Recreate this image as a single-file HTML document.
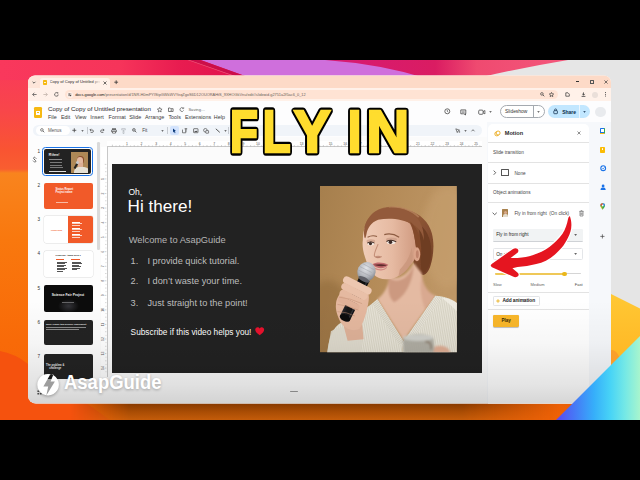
<!DOCTYPE html>
<html><head><meta charset="utf-8">
<style>
html,body{margin:0;padding:0;background:#000;}
body{width:640px;height:480px;overflow:hidden;position:relative;font-family:"Liberation Sans",sans-serif;}
#root{position:absolute;left:0;top:0;width:640px;height:480px;background:#000;overflow:hidden;}
.abs{position:absolute;}
#win{position:absolute;left:0;top:0;width:640px;height:480px;clip-path:inset(75.5px 29px 76.5px 28px round 7px 7px 8px 8px);}
#win div,#win span{position:absolute;white-space:pre;line-height:1;}
#win svg{position:absolute;overflow:visible;}
.m{font-size:5.4px;color:#3a3a3a;top:114.6px;}
.p{font-size:4.7px;color:#444;margin-top:1px;}
.hr{left:488px;width:101px;height:0.7px;background:#e3e3e3;}
.th{left:43.5px;width:49px;height:26.5px;border-radius:2px;overflow:hidden;}
.n{left:34px;width:6px;text-align:right;font-size:4.6px;color:#333;}
.sl{color:#bdbdbd;font-size:9.2px;}
</style></head><body>
<div id="root">
<svg class="abs" style="left:0;top:0" width="640" height="480" viewBox="0 0 640 480">
<defs>
<linearGradient id="gBase" x1="0" y1="60" x2="0" y2="420" gradientUnits="userSpaceOnUse">
<stop offset="0" stop-color="#f9385c"/><stop offset="0.14" stop-color="#f8464a"/><stop offset="0.25" stop-color="#f95432"/><stop offset="0.303" stop-color="#f95e30"/>
<stop offset="0.314" stop-color="#f9841e"/><stop offset="0.5" stop-color="#f9780e"/><stop offset="0.78" stop-color="#f86a08"/><stop offset="1" stop-color="#f66206"/>
</linearGradient>
<linearGradient id="gTopL" x1="0" y1="0" x2="240" y2="0" gradientUnits="userSpaceOnUse">
<stop offset="0" stop-color="#f9385c"/><stop offset="0.5" stop-color="#f6345a"/><stop offset="0.75" stop-color="#e81c50"/><stop offset="1" stop-color="#e0134d"/></linearGradient>
<linearGradient id="gMag" x1="325" y1="0" x2="570" y2="0" gradientUnits="userSpaceOnUse">
<stop offset="0" stop-color="#d61a74"/><stop offset="0.45" stop-color="#da1c62"/><stop offset="0.62" stop-color="#ef4a70"/><stop offset="1" stop-color="#f4587c"/></linearGradient>
<linearGradient id="gYel" x1="0" y1="294" x2="0" y2="420" gradientUnits="userSpaceOnUse">
<stop offset="0" stop-color="#ffc834"/><stop offset="0.6" stop-color="#ffb422"/><stop offset="1" stop-color="#ffa81c"/></linearGradient>
<linearGradient id="gShadow" x1="0" y1="403" x2="0" y2="420" gradientUnits="userSpaceOnUse">
<stop offset="0" stop-color="#853800"/><stop offset="0.5" stop-color="#a84c04"/><stop offset="1" stop-color="#c45c0a"/></linearGradient>
<linearGradient id="gShadowFade" x1="70" y1="0" x2="560" y2="0" gradientUnits="userSpaceOnUse">
<stop offset="0" stop-color="#fff" stop-opacity="0"/><stop offset="0.12" stop-color="#fff" stop-opacity="1"/><stop offset="0.8" stop-color="#fff" stop-opacity="1"/><stop offset="1" stop-color="#fff" stop-opacity="0.1"/></linearGradient>
<mask id="mShadow"><rect x="0" y="400" width="640" height="24" fill="url(#gShadowFade)"/></mask>
</defs>
<rect x="0" y="0" width="640" height="480" fill="#000"/>
<rect x="0" y="60" width="640" height="360" fill="url(#gBase)"/>
<!-- lower-left curve -->
<path d="M0,351 Q16,354 28,364 Q60,384 110,420 L0,420 Z" fill="#f5520e"/>
<!-- top strip -->
<rect x="0" y="60" width="258" height="20" fill="url(#gTopL)"/>
<path d="M200.5,60 L640,60 L640,80 L256,80 Z" fill="#cf6fdc"/>
<path d="M188.5,60 L200.5,60 L256,80 L246,80 Z" fill="#cc0e4a"/>
<path d="M187.6,60 L189.4,60 L246.6,80 L244.6,80 Z" fill="#f25a7c"/>
<path d="M325,60 Q380,64 425,78 L640,78 L640,60 Z" fill="url(#gMag)"/>
<!-- grey right -->
<path d="M568,60 Q520,68 478,78 L640,78 L640,60 Z" fill="#e6e6e6"/>
<rect x="600" y="60" width="40" height="360" fill="#e5e5e5"/>
<path d="M600,288.5 L640,308.5 L640,420 L600,420 Z" fill="url(#gYel)"/>
<ellipse cx="612" cy="372" rx="10" ry="22" fill="#f58a30" opacity="0.55"/>
<!-- bottom shadow -->
<rect x="60" y="400" width="520" height="20" fill="url(#gShadow)" mask="url(#mShadow)"/>
<rect x="0" y="0" width="640" height="60" fill="#000"/>
<rect x="0" y="420" width="640" height="60" fill="#000"/>
</svg>
<div id="win">
<div style="left:28px;top:75px;width:583px;height:330px;background:#fff"></div>
<!-- tab strip -->
<div style="left:28px;top:75px;width:583px;height:12.5px;background:linear-gradient(90deg,#fee6da 0,#fddac7 90px)"></div>
<div style="left:30.5px;top:78.5px;width:6.5px;height:6.5px;border-radius:2px;background:#fce7db"></div>
<svg style="left:32px;top:80.5px" width="4" height="3" viewBox="0 0 4 3"><path d="M0.6,0.8 L2,2.2 L3.4,0.8" fill="none" stroke="#333" stroke-width="0.8"/></svg>
<div style="left:39.5px;top:77.5px;width:70.5px;height:10px;background:#fff1e9;border-radius:3px 3px 0 0"></div>
<div style="left:42.8px;top:80.3px;width:4.4px;height:4.4px;border-radius:0.8px;background:#f5b912"></div>
<div style="left:43.9px;top:81.6px;width:2.2px;height:1.8px;background:#fff3d0"></div>
<div style="left:49.5px;top:80.4px;width:50px;overflow:hidden;font-size:4.1px;color:#2a2a2a;height:5px">Copy of Copy of Untitled pres</div>
<div style="left:92px;top:79px;width:9px;height:7px;background:linear-gradient(90deg,rgba(255,241,233,0),#fff1e9)"></div>
<svg style="left:103px;top:80.5px" width="4" height="4" viewBox="0 0 4 4"><path d="M0.5,0.5 L3.5,3.5 M3.5,0.5 L0.5,3.5" stroke="#333" stroke-width="0.7"/></svg>
<svg style="left:114.3px;top:80.3px" width="4.4" height="4.4" viewBox="0 0 4.4 4.4"><path d="M2.2,0.3 V4.1 M0.3,2.2 H4.1" stroke="#333" stroke-width="0.8"/></svg>
<!-- window controls -->
<div style="left:575.6px;top:81.4px;width:3.4px;height:0.7px;background:#333"></div>
<div style="left:589.7px;top:80.2px;width:2px;height:2px;border:0.45px solid #555;border-radius:0.5px"></div>
<svg style="left:603.5px;top:79.6px" width="4" height="4" viewBox="0 0 4 4"><path d="M0.4,0.4 L3.6,3.6 M3.6,0.4 L0.4,3.6" stroke="#333" stroke-width="0.65"/></svg>
<!-- address row -->
<div style="left:28px;top:87.5px;width:583px;height:13.8px;background:#fff1e9"></div>
<svg style="left:32px;top:92px" width="5" height="5" viewBox="0 0 5 5"><path d="M4.6,2.5 H0.8 M2.4,0.7 L0.6,2.5 L2.4,4.3" fill="none" stroke="#444" stroke-width="0.7"/></svg>
<svg style="left:43px;top:92px" width="5" height="5" viewBox="0 0 5 5"><path d="M0.4,2.5 H4.2 M2.6,0.7 L4.4,2.5 L2.6,4.3" fill="none" stroke="#b9aaa2" stroke-width="0.7"/></svg>
<svg style="left:53.5px;top:92px" width="5" height="5" viewBox="0 0 5 5"><path d="M4.2,2.5 A1.8,1.8 0 1 1 3.6,1.1" fill="none" stroke="#444" stroke-width="0.7"/><path d="M3.0,0.2 L4.4,0.5 L4.0,1.9 Z" fill="#444"/></svg>
<div style="left:65px;top:90px;width:492.5px;height:9.2px;border-radius:4.6px;background:#ffe3d4"></div>
<div style="left:66.6px;top:91.6px;width:6px;height:6px;border-radius:3px;background:#fff1e9"></div>
<svg style="left:67.8px;top:92.8px" width="3.6" height="3.6" viewBox="0 0 3.6 3.6"><path d="M0.2,1 H3.4 M0.2,2.6 H3.4" stroke="#333" stroke-width="0.5"/><circle cx="1.2" cy="1" r="0.6" fill="#333"/><circle cx="2.4" cy="2.6" r="0.6" fill="#333"/></svg>
<div style="left:75.2px;top:92.6px;font-size:3.9px;color:#222;letter-spacing:0"><span style="position:static;color:#111">docs.google.com</span><span style="position:static;color:#6b5f59">/presentation/d/1NR-H0mPYIStpGWkWVYeqZgoS6D12OUORAHtS_9XHOGkVnu/edit#slide=id.g2751a2f5ac6_0_12</span></div>
<svg style="left:539.6px;top:92.3px" width="4.6" height="4.6" viewBox="0 0 4.6 4.6"><circle cx="1.9" cy="1.9" r="1.3" fill="none" stroke="#333" stroke-width="0.65"/><path d="M2.9,2.9 L4.3,4.3" stroke="#333" stroke-width="0.75"/></svg>
<svg style="left:549.4px;top:92px" width="5" height="5" viewBox="0 0 10 10"><path d="M5,0.8 L6.3,3.7 L9.4,4 L7,6.1 L7.7,9.2 L5,7.6 L2.3,9.2 L3,6.1 L0.6,4 L3.7,3.7 Z" fill="none" stroke="#333" stroke-width="1.3"/></svg>
<svg style="left:565px;top:92px" width="5" height="5" viewBox="0 0 5 5"><path d="M0.8,0.8 H3 L4.3,2.1 V4.2 H0.8 Z" fill="none" stroke="#333" stroke-width="0.7"/></svg>
<svg style="left:580.5px;top:92px" width="5" height="5" viewBox="0 0 5 5"><path d="M2.5,0.4 V3 M1.2,1.9 L2.5,3.2 L3.8,1.9 M0.6,4.4 H4.4" fill="none" stroke="#333" stroke-width="0.75"/></svg>
<div style="left:592px;top:91.5px;width:6px;height:6px;border-radius:3px;background:#eadfd9"></div>
<div style="left:604.9px;top:92.1px;width:0.9px;height:0.9px;border-radius:1px;background:#333;box-shadow:0 1.7px 0 #333,0 3.4px 0 #333"></div>
<!-- docs header -->
<div style="left:28px;top:101.3px;width:583px;height:36px;background:#fdfdfe"></div>
<div style="left:34.4px;top:107px;width:7.6px;height:11.2px;border-radius:1.2px;background:#f6b913"></div>
<div style="left:35.9px;top:111.2px;width:4.6px;height:3.8px;box-sizing:border-box;border:0.7px solid #fff;border-radius:0.3px"></div>
<div style="left:36.2px;top:112.8px;width:4px;height:0.6px;background:#fff"></div>
<div style="left:48px;top:105.8px;font-size:6.2px;color:#1f1f1f">Copy of Copy of Untitled presentation</div>
<svg style="left:157.4px;top:106.6px" width="5.4" height="5.4" viewBox="0 0 10 10"><path d="M5,0.8 L6.3,3.7 L9.4,4 L7,6.1 L7.7,9.2 L5,7.6 L2.3,9.2 L3,6.1 L0.6,4 L3.7,3.7 Z" fill="none" stroke="#444" stroke-width="1.2"/></svg>
<svg style="left:168.2px;top:106.8px" width="5.6" height="5" viewBox="0 0 5.6 5"><path d="M0.5,1 H2.2 L2.8,1.7 H5.1 V4.5 H0.5 Z" fill="none" stroke="#444" stroke-width="0.7"/><path d="M2.2,3.1 H3.8 M3.2,2.5 L3.9,3.1 L3.2,3.7" fill="none" stroke="#444" stroke-width="0.5"/></svg>
<svg style="left:179.4px;top:106.8px" width="5.6" height="5" viewBox="0 0 5.6 5"><path d="M4.2,1.2 A1.9,1.9 0 1 0 4.6,3.4" fill="none" stroke="#555" stroke-width="0.7"/><path d="M3.2,1.6 L4.7,1.6 L4.7,0.2" fill="none" stroke="#555" stroke-width="0.6"/></svg>
<div style="left:188.4px;top:107.6px;font-size:4.1px;color:#666">Saving…</div>
<span class="m" style="left:48px">File</span><span class="m" style="left:61px">Edit</span><span class="m" style="left:74.9px">View</span><span class="m" style="left:90.3px">Insert</span><span class="m" style="left:108.6px">Format</span><span class="m" style="left:129.2px">Slide</span><span class="m" style="left:145px">Arrange</span><span class="m" style="left:168.4px">Tools</span><span class="m" style="left:184.9px">Extensions</span><span class="m" style="left:213.8px">Help</span>
<!-- header right -->
<svg style="left:443.9px;top:108.3px" width="6.6" height="6.6" viewBox="0 0 6.6 6.6"><circle cx="3.3" cy="3.3" r="2.5" fill="none" stroke="#3c3c3c" stroke-width="0.75"/><path d="M3.3,1.9 V3.4 L4.3,4.1" fill="none" stroke="#3c3c3c" stroke-width="0.65"/></svg>
<svg style="left:460.4px;top:108.5px" width="6.6" height="6.6" viewBox="0 0 6.6 6.6"><path d="M0.8,0.9 H5.8 V4.8 H4.9 L5.8,6 L3.8,4.8 H0.8 Z" fill="none" stroke="#3c3c3c" stroke-width="0.75"/><path d="M1.9,2.2 H4.7 M1.9,3.4 H4.7" stroke="#3c3c3c" stroke-width="0.5"/></svg>
<svg style="left:477.8px;top:108.6px" width="7.6" height="6.4" viewBox="0 0 7.6 6.4"><rect x="0.7" y="1.1" width="4.4" height="4.2" rx="1" fill="none" stroke="#3c3c3c" stroke-width="0.75"/><path d="M5.1,2.7 L6.9,1.5 V4.9 L5.1,3.7" fill="none" stroke="#3c3c3c" stroke-width="0.7"/></svg>
<svg style="left:488.8px;top:110.8px" width="3" height="2" viewBox="0 0 3 2"><path d="M0.2,0.3 H2.8 L1.5,1.8 Z" fill="#444"/></svg>
<div style="left:499.6px;top:105.3px;width:45px;height:12.6px;border-radius:7px;border:0.6px solid #a4a9af;box-sizing:border-box;background:#fff"></div>
<div style="left:533.3px;top:105.6px;width:0.6px;height:12px;background:#a4a9af"></div>
<div style="left:505px;top:110.1px;font-size:4.9px;color:#333">Slideshow</div>
<svg style="left:537.3px;top:110.8px" width="3" height="2" viewBox="0 0 3 2"><path d="M0.2,0.3 H2.8 L1.5,1.8 Z" fill="#444"/></svg>
<div style="left:548px;top:105.3px;width:41.5px;height:12.6px;border-radius:7px;background:#c2e7ff"></div>
<div style="left:579.2px;top:105.3px;width:0.7px;height:12.6px;background:#eaf6ff"></div>
<svg style="left:553.4px;top:108.2px" width="5.2" height="6.4" viewBox="0 0 5.2 6.4"><rect x="0.8" y="2.7" width="3.6" height="3" rx="0.5" fill="none" stroke="#0b2a4a" stroke-width="0.75"/><path d="M1.6,2.7 V1.9 A1,1 0 0 1 3.6,1.9 V2.7" fill="none" stroke="#0b2a4a" stroke-width="0.7"/></svg>
<div style="left:562.2px;top:109.9px;font-size:5px;font-weight:700;color:#0b2a4a">Share</div>
<svg style="left:582.6px;top:110.8px" width="3" height="2" viewBox="0 0 3 2"><path d="M0.2,0.3 H2.8 L1.5,1.8 Z" fill="#0b2a4a"/></svg>
<div style="left:595px;top:106.8px;width:10.6px;height:10.6px;border-radius:6px;background:#e9ebee"></div>
<!-- toolbar -->
<div style="left:33px;top:125px;width:448.5px;height:11px;border-radius:5.5px;background:#f0f4f9"></div>
<div style="left:36px;top:126px;width:33.8px;height:9px;border-radius:4.5px;background:#fff"></div>
<svg style="left:39.6px;top:128.2px" width="4.6" height="4.6" viewBox="0 0 4.6 4.6"><circle cx="1.9" cy="1.9" r="1.3" fill="none" stroke="#444" stroke-width="0.65"/><path d="M2.9,2.9 L4.3,4.3" stroke="#444" stroke-width="0.75"/></svg>
<div style="left:48px;top:129.3px;font-size:4.5px;color:#555">Menus</div>
<!-- toolbar icons -->
<svg style="left:72.4px;top:128.1px" width="4.6" height="4.6" viewBox="0 0 4.6 4.6"><path d="M2.3,0.3 V4.3 M0.3,2.3 H4.3" stroke="#444" stroke-width="0.8"/></svg>
<svg style="left:80.6px;top:129.5px" width="3" height="2" viewBox="0 0 3 2"><path d="M0.3,0.3 H2.7 L1.5,1.7 Z" fill="#444"/></svg>
<div style="left:86.6px;top:127.2px;width:0.5px;height:6.6px;background:#c7cbd1"></div>
<svg style="left:89.4px;top:128px" width="5" height="5" viewBox="0 0 5 5"><path d="M1,2 H3.2 A1.2,1.2 0 0 1 3.2,4.4 H1.6" fill="none" stroke="#444" stroke-width="0.7"/><path d="M2,0.8 L0.8,2 L2,3.2" fill="none" stroke="#444" stroke-width="0.7"/></svg>
<svg style="left:100.3px;top:128px" width="5" height="5" viewBox="0 0 5 5"><path d="M4,2 H1.8 A1.2,1.2 0 0 0 1.8,4.4 H3.4" fill="none" stroke="#444" stroke-width="0.7"/><path d="M3,0.8 L4.2,2 L3,3.2" fill="none" stroke="#444" stroke-width="0.7"/></svg>
<svg style="left:110.8px;top:127.6px" width="6" height="5.6" viewBox="0 0 6 5.6"><rect x="0.6" y="1.8" width="4.8" height="2.4" rx="0.6" fill="none" stroke="#444" stroke-width="0.75"/><rect x="1.7" y="0.5" width="2.6" height="1.3" fill="none" stroke="#444" stroke-width="0.6"/><rect x="1.7" y="3.3" width="2.6" height="1.8" fill="#fff" stroke="#444" stroke-width="0.6"/></svg>
<svg style="left:121.4px;top:127.6px" width="5" height="6" viewBox="0 0 5 6"><path d="M0.7,0.6 H4.3 V2 H0.7 Z M2.5,2 V3.2 M2,3.2 H3 V5.5 H2 Z" fill="none" stroke="#b5b9bf" stroke-width="0.7"/></svg>
<svg style="left:132.3px;top:128.1px" width="4.8" height="4.8" viewBox="0 0 4.8 4.8"><circle cx="1.9" cy="1.9" r="1.4" fill="none" stroke="#444" stroke-width="0.65"/><path d="M2.9,2.9 L4.4,4.4" stroke="#444" stroke-width="0.75"/><path d="M1.2,1.9 H2.6 M1.9,1.2 V2.6" stroke="#444" stroke-width="0.4"/></svg>
<div style="left:142.2px;top:129.2px;font-size:4.6px;color:#444">Fit</div>
<svg style="left:160.8px;top:129.5px" width="3" height="2" viewBox="0 0 3 2"><path d="M0.3,0.3 H2.7 L1.5,1.7 Z" fill="#444"/></svg>
<div style="left:166.6px;top:127.2px;width:0.5px;height:6.6px;background:#c7cbd1"></div>
<div style="left:170.2px;top:126.2px;width:8.4px;height:8.6px;border-radius:2px;background:#d3e3fd"></div>
<svg style="left:172px;top:127.7px" width="5" height="5.6" viewBox="0 0 5 5.6"><path d="M1,0.5 L1,4.4 L2,3.5 L2.8,5.2 L3.5,4.9 L2.7,3.2 L4,3.1 Z" fill="#0b3a7a"/></svg>
<svg style="left:182px;top:127.8px" width="5.6" height="5.4" viewBox="0 0 5.6 5.4"><path d="M0.5,1.6 V4.8 H3.8 V2.6" fill="none" stroke="#444" stroke-width="0.65"/><path d="M2.6,0.8 H5.2 M3.9,0.8 V3.6" stroke="#444" stroke-width="0.8"/></svg>
<svg style="left:192.5px;top:127.8px" width="5.6" height="5.4" viewBox="0 0 5.6 5.4"><rect x="0.6" y="0.7" width="4.4" height="4" rx="0.4" fill="none" stroke="#444" stroke-width="0.7"/><path d="M1.2,4 L2.3,2.8 L3,3.5 L3.7,2.6 L4.5,4 Z" fill="#444"/></svg>
<svg style="left:203.4px;top:127.6px" width="6.2" height="5.8" viewBox="0 0 6.2 5.8"><circle cx="2.4" cy="2.3" r="1.8" fill="none" stroke="#444" stroke-width="0.65"/><rect x="2.8" y="2.6" width="2.8" height="2.6" rx="0.3" fill="#f0f4f9" stroke="#444" stroke-width="0.65"/></svg>
<svg style="left:215px;top:127.8px" width="5.6" height="5.2" viewBox="0 0 5.6 5.2"><path d="M0.8,0.8 L4.8,4.4" stroke="#444" stroke-width="0.9"/></svg>
<svg style="left:223.8px;top:129.5px" width="3" height="2" viewBox="0 0 3 2"><path d="M0.3,0.3 H2.7 L1.5,1.7 Z" fill="#444"/></svg>
<div style="left:228.4px;top:127.2px;width:0.5px;height:6.6px;background:#c7cbd1"></div>
<!-- toolbar right end -->
<svg style="left:455.4px;top:127.6px" width="5.4" height="5.4" viewBox="0 0 5.4 5.4"><path d="M0.8,0.8 L4.6,2.2 L3,2.9 L2.3,4.6 Z" fill="none" stroke="#444" stroke-width="0.65"/><path d="M3.6,3.9 H5.2 M4.4,3.1 V4.7" stroke="#444" stroke-width="0.5"/></svg>
<svg style="left:463.6px;top:129.5px" width="3" height="2" viewBox="0 0 3 2"><path d="M0.3,0.3 H2.7 L1.5,1.7 Z" fill="#444"/></svg>
<svg style="left:470.5px;top:128.8px" width="4" height="3" viewBox="0 0 4 3"><path d="M0.5,2.3 L2,0.7 L3.5,2.3" fill="none" stroke="#444" stroke-width="0.7"/></svg>
<!-- main area -->
<div style="left:28px;top:137.3px;width:72px;height:270px;background:#fdfdfd"></div>
<div style="left:100px;top:137.3px;width:387px;height:270px;background:#fbfbfb"></div>
<!-- filmstrip scrollbar -->
<div style="left:97.2px;top:141.6px;width:2.4px;height:108px;border-radius:1.2px;background:#dadada"></div>
<!-- rulers -->
<div style="left:106.6px;top:140.6px;width:375px;height:5.8px;background:#fff;border-bottom:0.5px solid #c8c8c8"></div>
<div style="left:101.4px;top:146.6px;width:5.2px;height:230px;background:#fff;border-right:0.5px solid #c8c8c8"></div>
<svg style="left:0;top:0" width="640" height="480" viewBox="0 0 640 480"><text x="127.0" y="144.6" font-size="3.4" fill="#555" text-anchor="middle" font-family="Liberation Sans, sans-serif">1</text><text x="141.5" y="144.6" font-size="3.4" fill="#555" text-anchor="middle" font-family="Liberation Sans, sans-serif">2</text><text x="156.1" y="144.6" font-size="3.4" fill="#555" text-anchor="middle" font-family="Liberation Sans, sans-serif">3</text><text x="170.6" y="144.6" font-size="3.4" fill="#555" text-anchor="middle" font-family="Liberation Sans, sans-serif">4</text><text x="185.2" y="144.6" font-size="3.4" fill="#555" text-anchor="middle" font-family="Liberation Sans, sans-serif">5</text><text x="199.7" y="144.6" font-size="3.4" fill="#555" text-anchor="middle" font-family="Liberation Sans, sans-serif">6</text><text x="214.2" y="144.6" font-size="3.4" fill="#555" text-anchor="middle" font-family="Liberation Sans, sans-serif">7</text><text x="228.8" y="144.6" font-size="3.4" fill="#555" text-anchor="middle" font-family="Liberation Sans, sans-serif">8</text><text x="243.4" y="144.6" font-size="3.4" fill="#555" text-anchor="middle" font-family="Liberation Sans, sans-serif">9</text><text x="257.9" y="144.6" font-size="3.4" fill="#555" text-anchor="middle" font-family="Liberation Sans, sans-serif">10</text><text x="272.5" y="144.6" font-size="3.4" fill="#555" text-anchor="middle" font-family="Liberation Sans, sans-serif">11</text><text x="287.0" y="144.6" font-size="3.4" fill="#555" text-anchor="middle" font-family="Liberation Sans, sans-serif">12</text><text x="301.6" y="144.6" font-size="3.4" fill="#555" text-anchor="middle" font-family="Liberation Sans, sans-serif">13</text><text x="316.1" y="144.6" font-size="3.4" fill="#555" text-anchor="middle" font-family="Liberation Sans, sans-serif">14</text><text x="330.6" y="144.6" font-size="3.4" fill="#555" text-anchor="middle" font-family="Liberation Sans, sans-serif">15</text><text x="345.2" y="144.6" font-size="3.4" fill="#555" text-anchor="middle" font-family="Liberation Sans, sans-serif">16</text><text x="359.8" y="144.6" font-size="3.4" fill="#555" text-anchor="middle" font-family="Liberation Sans, sans-serif">17</text><text x="374.3" y="144.6" font-size="3.4" fill="#555" text-anchor="middle" font-family="Liberation Sans, sans-serif">18</text><text x="388.9" y="144.6" font-size="3.4" fill="#555" text-anchor="middle" font-family="Liberation Sans, sans-serif">19</text><text x="403.4" y="144.6" font-size="3.4" fill="#555" text-anchor="middle" font-family="Liberation Sans, sans-serif">20</text><text x="418.0" y="144.6" font-size="3.4" fill="#555" text-anchor="middle" font-family="Liberation Sans, sans-serif">21</text><text x="432.5" y="144.6" font-size="3.4" fill="#555" text-anchor="middle" font-family="Liberation Sans, sans-serif">22</text><text x="447.1" y="144.6" font-size="3.4" fill="#555" text-anchor="middle" font-family="Liberation Sans, sans-serif">23</text><text x="461.6" y="144.6" font-size="3.4" fill="#555" text-anchor="middle" font-family="Liberation Sans, sans-serif">24</text><text x="476.1" y="144.6" font-size="3.4" fill="#555" text-anchor="middle" font-family="Liberation Sans, sans-serif">25</text><text transform="translate(104.4,179.0) rotate(-90)" font-size="3.4" fill="#555" text-anchor="middle" font-family="Liberation Sans, sans-serif">1</text><text transform="translate(104.4,193.5) rotate(-90)" font-size="3.4" fill="#555" text-anchor="middle" font-family="Liberation Sans, sans-serif">2</text><text transform="translate(104.4,208.1) rotate(-90)" font-size="3.4" fill="#555" text-anchor="middle" font-family="Liberation Sans, sans-serif">3</text><text transform="translate(104.4,222.6) rotate(-90)" font-size="3.4" fill="#555" text-anchor="middle" font-family="Liberation Sans, sans-serif">4</text><text transform="translate(104.4,237.2) rotate(-90)" font-size="3.4" fill="#555" text-anchor="middle" font-family="Liberation Sans, sans-serif">5</text><text transform="translate(104.4,251.7) rotate(-90)" font-size="3.4" fill="#555" text-anchor="middle" font-family="Liberation Sans, sans-serif">6</text><text transform="translate(104.4,266.2) rotate(-90)" font-size="3.4" fill="#555" text-anchor="middle" font-family="Liberation Sans, sans-serif">7</text><text transform="translate(104.4,280.8) rotate(-90)" font-size="3.4" fill="#555" text-anchor="middle" font-family="Liberation Sans, sans-serif">8</text><text transform="translate(104.4,295.4) rotate(-90)" font-size="3.4" fill="#555" text-anchor="middle" font-family="Liberation Sans, sans-serif">9</text><text transform="translate(104.4,309.9) rotate(-90)" font-size="3.4" fill="#555" text-anchor="middle" font-family="Liberation Sans, sans-serif">10</text><text transform="translate(104.4,324.5) rotate(-90)" font-size="3.4" fill="#555" text-anchor="middle" font-family="Liberation Sans, sans-serif">11</text><text transform="translate(104.4,339.0) rotate(-90)" font-size="3.4" fill="#555" text-anchor="middle" font-family="Liberation Sans, sans-serif">12</text><text transform="translate(104.4,353.6) rotate(-90)" font-size="3.4" fill="#555" text-anchor="middle" font-family="Liberation Sans, sans-serif">13</text><text transform="translate(104.4,368.1) rotate(-90)" font-size="3.4" fill="#555" text-anchor="middle" font-family="Liberation Sans, sans-serif">14</text><path d="M112.40,144.70 V146.3 M116.04,145.50 V146.3 M119.68,145.10 V146.3 M123.31,145.50 V146.3 M126.95,144.70 V146.3 M130.59,145.50 V146.3 M134.23,145.10 V146.3 M137.86,145.50 V146.3 M141.50,144.70 V146.3 M145.14,145.50 V146.3 M148.78,145.10 V146.3 M152.41,145.50 V146.3 M156.05,144.70 V146.3 M159.69,145.50 V146.3 M163.33,145.10 V146.3 M166.96,145.50 V146.3 M170.60,144.70 V146.3 M174.24,145.50 V146.3 M177.88,145.10 V146.3 M181.51,145.50 V146.3 M185.15,144.70 V146.3 M188.79,145.50 V146.3 M192.43,145.10 V146.3 M196.06,145.50 V146.3 M199.70,144.70 V146.3 M203.34,145.50 V146.3 M206.98,145.10 V146.3 M210.61,145.50 V146.3 M214.25,144.70 V146.3 M217.89,145.50 V146.3 M221.53,145.10 V146.3 M225.16,145.50 V146.3 M228.80,144.70 V146.3 M232.44,145.50 V146.3 M236.08,145.10 V146.3 M239.71,145.50 V146.3 M243.35,144.70 V146.3 M246.99,145.50 V146.3 M250.62,145.10 V146.3 M254.26,145.50 V146.3 M257.90,144.70 V146.3 M261.54,145.50 V146.3 M265.18,145.10 V146.3 M268.81,145.50 V146.3 M272.45,144.70 V146.3 M276.09,145.50 V146.3 M279.73,145.10 V146.3 M283.36,145.50 V146.3 M287.00,144.70 V146.3 M290.64,145.50 V146.3 M294.27,145.10 V146.3 M297.91,145.50 V146.3 M301.55,144.70 V146.3 M305.19,145.50 V146.3 M308.83,145.10 V146.3 M312.46,145.50 V146.3 M316.10,144.70 V146.3 M319.74,145.50 V146.3 M323.38,145.10 V146.3 M327.01,145.50 V146.3 M330.65,144.70 V146.3 M334.29,145.50 V146.3 M337.93,145.10 V146.3 M341.56,145.50 V146.3 M345.20,144.70 V146.3 M348.84,145.50 V146.3 M352.48,145.10 V146.3 M356.11,145.50 V146.3 M359.75,144.70 V146.3 M363.39,145.50 V146.3 M367.02,145.10 V146.3 M370.66,145.50 V146.3 M374.30,144.70 V146.3 M377.94,145.50 V146.3 M381.58,145.10 V146.3 M385.21,145.50 V146.3 M388.85,144.70 V146.3 M392.49,145.50 V146.3 M396.12,145.10 V146.3 M399.76,145.50 V146.3 M403.40,144.70 V146.3 M407.04,145.50 V146.3 M410.68,145.10 V146.3 M414.31,145.50 V146.3 M417.95,144.70 V146.3 M421.59,145.50 V146.3 M425.23,145.10 V146.3 M428.86,145.50 V146.3 M432.50,144.70 V146.3 M436.14,145.50 V146.3 M439.77,145.10 V146.3 M443.41,145.50 V146.3 M447.05,144.70 V146.3 M450.69,145.50 V146.3 M454.33,145.10 V146.3 M457.96,145.50 V146.3 M461.60,144.70 V146.3 M465.24,145.50 V146.3 M468.88,145.10 V146.3 M472.51,145.50 V146.3 M476.15,144.70 V146.3 M479.79,145.50 V146.3 M104.80,164.40 H106.4 M105.60,168.04 H106.4 M105.20,171.68 H106.4 M105.60,175.31 H106.4 M104.80,178.95 H106.4 M105.60,182.59 H106.4 M105.20,186.23 H106.4 M105.60,189.86 H106.4 M104.80,193.50 H106.4 M105.60,197.14 H106.4 M105.20,200.78 H106.4 M105.60,204.41 H106.4 M104.80,208.05 H106.4 M105.60,211.69 H106.4 M105.20,215.33 H106.4 M105.60,218.96 H106.4 M104.80,222.60 H106.4 M105.60,226.24 H106.4 M105.20,229.88 H106.4 M105.60,233.51 H106.4 M104.80,237.15 H106.4 M105.60,240.79 H106.4 M105.20,244.43 H106.4 M105.60,248.06 H106.4 M104.80,251.70 H106.4 M105.60,255.34 H106.4 M105.20,258.98 H106.4 M105.60,262.61 H106.4 M104.80,266.25 H106.4 M105.60,269.89 H106.4 M105.20,273.52 H106.4 M105.60,277.16 H106.4 M104.80,280.80 H106.4 M105.60,284.44 H106.4 M105.20,288.08 H106.4 M105.60,291.71 H106.4 M104.80,295.35 H106.4 M105.60,298.99 H106.4 M105.20,302.62 H106.4 M105.60,306.26 H106.4 M104.80,309.90 H106.4 M105.60,313.54 H106.4 M105.20,317.18 H106.4 M105.60,320.81 H106.4 M104.80,324.45 H106.4 M105.60,328.09 H106.4 M105.20,331.73 H106.4 M105.60,335.36 H106.4 M104.80,339.00 H106.4 M105.60,342.64 H106.4 M105.20,346.27 H106.4 M105.60,349.91 H106.4 M104.80,353.55 H106.4 M105.60,357.19 H106.4 M105.20,360.83 H106.4 M105.60,364.46 H106.4 M104.80,368.10 H106.4 M105.60,371.74 H106.4" stroke="#777" stroke-width="0.35" fill="none"/></svg>
<!-- slide -->
<div style="left:112.4px;top:164.4px;width:369.7px;height:208.5px;background:#222222"></div>
<div style="left:128.4px;top:187.7px;font-size:8.5px;color:#fff">Oh,</div>
<div style="left:127.6px;top:198.1px;font-size:17.1px;color:#fff">Hi there!</div>
<div style="left:128.7px;top:236px;font-size:9.3px;color:#b5b5b5">Welcome to AsapGuide</div>
<div class="sl" style="left:130.6px;top:256.6px">1.</div><div class="sl" style="left:147.5px;top:256.6px">I provide quick tutorial.</div>
<div class="sl" style="left:130.6px;top:276.9px">2.</div><div class="sl" style="left:147.5px;top:276.9px">I don’t waste your time.</div>
<div class="sl" style="left:130.6px;top:298.5px">3.</div><div class="sl" style="left:147.5px;top:298.5px">Just straight to the point!</div>
<div style="left:130.6px;top:328.3px;font-size:8.3px;color:#fff">Subscribe if this video helps you!</div>
<svg style="left:254.6px;top:326.8px" width="9.4" height="8.6" viewBox="0 0 20 18"><path d="M10,17.5 C4,12.5 0.5,9.5 0.5,5.5 C0.5,2.5 2.8,0.5 5.4,0.5 C7.3,0.5 9,1.6 10,3.2 C11,1.6 12.7,0.5 14.6,0.5 C17.2,0.5 19.5,2.5 19.5,5.5 C19.5,9.5 16,12.5 10,17.5 Z" fill="#e9112d"/></svg>
<!--PHOTO-->
<svg style="left:319.6px;top:185.5px" width="136.9" height="166.3" viewBox="10 10 377 458" preserveAspectRatio="none">
<defs>
<linearGradient id="pbg" x1="0" y1="0" x2="1" y2="0.25"><stop offset="0" stop-color="#a67f4d"/><stop offset="0.45" stop-color="#b38a57"/><stop offset="1" stop-color="#bf9766"/></linearGradient>
<linearGradient id="skinG" x1="0" y1="0" x2="1" y2="0"><stop offset="0" stop-color="#f0cdb8"/><stop offset="0.55" stop-color="#e6baa2"/><stop offset="1" stop-color="#d09a80"/></linearGradient>
<linearGradient id="hairG" x1="0" y1="0" x2="1" y2="1"><stop offset="0" stop-color="#a5704a"/><stop offset="0.5" stop-color="#8c5434"/><stop offset="1" stop-color="#6f3d24"/></linearGradient>
<linearGradient id="micG" x1="0" y1="0" x2="1" y2="0.4"><stop offset="0" stop-color="#34353a"/><stop offset="0.4" stop-color="#141416"/><stop offset="1" stop-color="#0a0a0c"/></linearGradient>
<radialGradient id="headG" cx="0.4" cy="0.35" r="0.7"><stop offset="0" stop-color="#e2e4e8"/><stop offset="0.6" stop-color="#b4b7bd"/><stop offset="1" stop-color="#7d8087"/></radialGradient>
<filter id="b1" x="-20%" y="-20%" width="140%" height="140%"><feGaussianBlur stdDeviation="1.2"/></filter>
<filter id="b2" x="-20%" y="-20%" width="140%" height="140%"><feGaussianBlur stdDeviation="2.2"/></filter>
<filter id="b4" x="-20%" y="-20%" width="140%" height="140%"><feGaussianBlur stdDeviation="4"/></filter>
<filter id="b8" x="-30%" y="-30%" width="160%" height="160%"><feGaussianBlur stdDeviation="10"/></filter>
<clipPath id="pc"><rect x="10" y="10" width="377" height="458"/></clipPath>
<pattern id="rib" width="5" height="5" patternUnits="userSpaceOnUse" patternTransform="rotate(8)"><rect width="5" height="5" fill="#e7e3d7"/><rect width="1.6" height="5" fill="#cfcaba"/></pattern>
<pattern id="rib2" width="5" height="5" patternUnits="userSpaceOnUse" patternTransform="rotate(-38)"><rect width="5" height="5" fill="#e9e5da"/><rect width="1.6" height="5" fill="#cbc6b6"/></pattern>
<pattern id="rib3" width="5" height="5" patternUnits="userSpaceOnUse" patternTransform="rotate(52)"><rect width="5" height="5" fill="#e4e0d4"/><rect width="1.6" height="5" fill="#c7c2b2"/></pattern>
</defs>
<g clip-path="url(#pc)">
<rect x="10" y="10" width="377" height="458" fill="url(#pbg)"/>
<ellipse cx="30" cy="420" rx="80" ry="150" fill="#8e693b" opacity="0.55" filter="url(#b8)"/>
<ellipse cx="360" cy="150" rx="70" ry="140" fill="#c7a070" opacity="0.55" filter="url(#b8)"/>
<!-- hair back -->
<g filter="url(#b1)">
<path d="M132,152 C128,118 142,92 165,78 C185,64 225,64 252,76 C287,86 310,110 318,140 C326,170 322,207 314,230 C308,247 299,258 290,254 C280,250 272,238 268,222 L250,120 Z" fill="url(#hairG)"/>
<path d="M280,112 C306,130 320,165 316,202 C314,227 303,247 292,252 C284,232 290,160 280,112 Z" fill="#6e3c24"/>
<path d="M200,70 C230,64 262,76 282,96" stroke="#b98660" stroke-width="5" fill="none" opacity="0.7"/>
</g>
<!-- neck + chest -->
<g filter="url(#b2)">
<path d="M200,255 C215,272 250,262 268,222 L290,250 C292,285 305,305 328,312 L240,435 L168,322 C188,305 200,285 200,255 Z" fill="#e4baa2"/>
<path d="M200,262 C220,280 252,268 268,228 C266,280 240,318 214,330 C198,318 196,292 200,262 Z" fill="#c48e74" opacity="0.75"/>
<path d="M290,255 C296,285 306,300 326,312 L300,350 C288,320 284,290 290,255 Z" fill="#d6a58c" opacity="0.8"/>
</g>
<!-- face -->
<g filter="url(#b1)">
<path d="M136,124 C144,108 166,98 196,97 C222,96 244,102 258,114 C268,130 272,160 276,190 C276,205 268,220 257,228 C246,246 222,266 196,267 C180,268 166,262 158,254 C148,242 140,226 134,206 C128,190 126,170 128,160 C128,145 130,130 136,119 Z" fill="url(#skinG)"/>
<path d="M230,240 C245,225 258,205 262,180 C268,200 266,222 257,230 C248,244 238,252 226,258 Z" fill="#c9967c" opacity="0.8"/>
<!-- hair front -->
<path d="M132,150 C128,120 140,96 162,80 C185,66 228,66 254,80 C280,92 298,120 296,160 C292,140 282,124 264,115 C240,101 200,96 170,103 C150,111 141,126 138,142 C136,152 134,158 132,150 Z" fill="#935a3a"/>
<path d="M258,108 C280,125 292,160 288,200 C284,215 278,205 276,190 C272,160 268,130 258,108 Z" fill="#83492c"/>
<!-- ear -->
<ellipse cx="277" cy="198" rx="9" ry="19" fill="#dba48a"/>
<ellipse cx="278" cy="198" rx="4" ry="11" fill="#c0846c"/>
<!-- eyes, brows -->
<path d="M141,151 Q154,144 167,149" stroke="#8d5c42" stroke-width="3.2" fill="none"/>
<path d="M187,144 Q208,138 228,151" stroke="#8d5c42" stroke-width="3.4" fill="none"/>
<ellipse cx="150" cy="162" rx="12" ry="5" fill="#c99a84" opacity="0.7"/>
<ellipse cx="207" cy="157" rx="15" ry="5.5" fill="#c99a84" opacity="0.7"/>
<ellipse cx="150" cy="169" rx="9" ry="4.6" fill="#f3ece6"/>
<ellipse cx="206" cy="165" rx="12" ry="5.2" fill="#f3ece6"/>
<circle cx="149" cy="168.6" r="4.4" fill="#3a2a26"/>
<circle cx="204" cy="164.6" r="5" fill="#3a2a26"/>
<path d="M140,167 Q150,160 160,167" stroke="#3e2a22" stroke-width="2.6" fill="none"/>
<path d="M193,163 Q206,155 220,164" stroke="#3e2a22" stroke-width="2.8" fill="none"/>
<!-- nose -->
<path d="M170,170 C164,185 158,196 160,203 C164,208 172,208 180,204" stroke="#c48f78" stroke-width="3" fill="none"/>
<ellipse cx="170" cy="205" rx="7" ry="3" fill="#b57c68" opacity="0.7"/>
<!-- mouth -->
<path d="M154,226 C166,218 184,220 198,227 C190,238 168,241 154,226 Z" fill="#c06a6c"/>
<path d="M158,227 C170,224 184,225 194,228 C184,232 168,232 158,227 Z" fill="#5e2a2c"/>
<path d="M160,236 C172,244 186,242 194,234" stroke="#d28a84" stroke-width="3" fill="none"/>
</g>
<!-- sweater -->
<g filter="url(#b1)">
<path d="M168,322 L240,438 L236,470 L30,470 C34,430 44,398 72,384 C104,368 140,346 168,322 Z" fill="url(#rib)"/>
<path d="M328,312 C352,312 376,322 392,336 L392,470 L236,470 L240,438 Z" fill="url(#rib)"/>
<path d="M168,322 L154,334 L228,448 L240,438 Z" fill="url(#rib3)"/>
<path d="M328,312 L346,318 L252,452 L228,448 L240,438 Z" fill="url(#rib2)"/>
<path d="M40,410 C60,395 100,392 128,420 L122,470 L30,470 Z" fill="#dcd7ca" opacity="0.9"/>
<path d="M346,318 C362,318 380,326 392,336 L392,360 C376,344 360,330 346,318 Z" fill="#f1eee5" opacity="0.8"/>
</g>
<!-- wrist/hand back -->
<g filter="url(#b1)">
<path d="M72,384 C86,398 108,402 126,390 L130,432 L86,436 Z" fill="#ddb097"/>
<path d="M54,336 C56,306 84,282 112,280 C136,282 148,302 144,326 C140,352 132,384 118,404 C100,412 78,404 66,384 C58,368 52,350 54,336 Z" fill="#e4b79e"/>
</g>
<!-- mic -->
<g filter="url(#b1)">
<path d="M133.0,264.7 L78.8,373.4" stroke="url(#micG)" stroke-width="30" stroke-linecap="butt" fill="none"/>
<ellipse cx="78.8" cy="373.4" rx="15.5" ry="9" transform="rotate(27 78.8 373.4)" fill="#0a0a0c"/>
<path d="M138.2,276.1 L90.5,372.1" stroke="#3c3d42" stroke-width="4" opacity="0.7" fill="none"/>
<ellipse cx="138" cy="246" rx="25" ry="27" transform="rotate(27 138 246)" fill="url(#headG)"/>
<ellipse cx="131" cy="267" rx="17" ry="6" transform="rotate(27 131 267)" fill="#5e6168"/>
<path d="M120,232 L152,248 M116,242 L152,260 M128,224 L158,240" stroke="#8e9198" stroke-width="1.6" opacity="0.7"/>
</g>
<!-- fingers over mic -->
<g filter="url(#b1)">
<path d="M83.7,269.3 L141.8,298.4" stroke="#edc7b0" stroke-width="20.5" stroke-linecap="round" fill="none"/><path d="M78.5,287.4 L130.9,313.6" stroke="#e9c0a8" stroke-width="19.7" stroke-linecap="round" fill="none"/><path d="M73.3,305.4 L120.0,328.8" stroke="#e5b9a0" stroke-width="18.9" stroke-linecap="round" fill="none"/><path d="M68.6,322.3 L109.6,342.9" stroke="#e0b198" stroke-width="18.1" stroke-linecap="round" fill="none"/>
<path d="M62,316 Q92,318 126,334 M58,336 Q86,338 116,352 M58,356 Q82,356 106,368" stroke="#c08c72" stroke-width="1.8" fill="none" opacity="0.75"/>
</g>
<!-- glass + hand -->
<g filter="url(#b2)">
<path d="M238,428 C258,414 304,414 322,428 L326,470 L240,470 Z" fill="#a9a69c" opacity="0.9"/>
<ellipse cx="280" cy="428" rx="42" ry="9" fill="#d2d2cc" opacity="0.9"/>
<path d="M300,440 C310,436 318,445 316,460" stroke="#7e6a58" stroke-width="5" fill="none" opacity="0.7"/>
<path d="M326,452 C345,446 365,452 370,470 L322,470 Z" fill="#dcab92"/>
</g>
</g>
</svg>
<!--/PHOTO-->
<!-- right gap + side panel -->
<div style="left:486.5px;top:122px;width:125px;height:285px;background:#f6f8fb"></div>
<div style="left:488.4px;top:123.6px;width:100.4px;height:285px;background:#fff;border-radius:5px 5px 0 0"></div>
<!-- panel header -->
<svg style="left:493.6px;top:129.8px" width="7" height="7" viewBox="0 0 7 7"><circle cx="2.8" cy="3.9" r="2" fill="none" stroke="#e8a100" stroke-width="0.8"/><circle cx="4.1" cy="3" r="2" fill="#fff" stroke="#e8a100" stroke-width="0.8"/></svg>
<div style="left:504.8px;top:131.2px;font-size:5.6px;font-weight:700;color:#2a2a2a">Motion</div>
<svg style="left:576.6px;top:131.2px" width="4" height="4" viewBox="0 0 4 4"><path d="M0.5,0.5 L3.5,3.5 M3.5,0.5 L0.5,3.5" stroke="#444" stroke-width="0.6"/></svg>
<div class="hr" style="top:142.3px"></div>
<div class="p" style="left:493px;top:149.8px">Slide transition</div>
<div class="hr" style="top:162px"></div>
<svg style="left:493px;top:170.2px" width="3.4" height="5.4" viewBox="0 0 3.4 5.4"><path d="M0.7,0.6 L2.7,2.7 L0.7,4.8" fill="none" stroke="#333" stroke-width="0.75"/></svg>
<div style="left:501px;top:169.3px;width:8px;height:6.6px;box-sizing:border-box;border:0.8px solid #555;border-radius:0.6px"></div>
<div class="p" style="left:514.4px;top:170.6px">None</div>
<div class="hr" style="top:182.6px"></div>
<div class="p" style="left:493px;top:190.3px">Object animations</div>
<div class="hr" style="top:202.4px"></div>
<svg style="left:491.6px;top:211.6px" width="5.4" height="3.4" viewBox="0 0 5.4 3.4"><path d="M0.6,0.7 L2.7,2.7 L4.8,0.7" fill="none" stroke="#333" stroke-width="0.75"/></svg>
<div style="left:501.8px;top:209.4px;width:6.6px;height:7.2px;background:#a9824e;border-radius:0.5px;overflow:hidden"><div style="left:2px;top:1.6px;width:3px;height:3px;border-radius:2px;background:#d9a98a"></div><div style="left:1px;top:4.4px;width:5px;height:3px;border-radius:2px 2px 0 0;background:#e4ddcf"></div></div>
<div class="p" style="left:514.4px;top:210.7px">Fly in from right  (On click)</div>
<svg style="left:578.6px;top:209.6px" width="5" height="6.6" viewBox="0 0 5 6.6"><path d="M0.4,1.4 H4.6 M1.7,0.6 H3.3 M1,1.4 V6 H4 V1.4 M2,2.6 V4.9 M3,2.6 V4.9" fill="none" stroke="#555" stroke-width="0.6"/></svg>
<!-- dropdown 1 -->
<div style="left:493px;top:228.6px;width:89.6px;height:12.2px;background:#f1f3f4;border-radius:1.2px;border-bottom:0.5px solid #cfd2d6"></div>
<div class="p" style="left:496.2px;top:232.4px;color:#222">Fly in from right</div>
<svg style="left:574.4px;top:233.9px" width="3.2" height="2" viewBox="0 0 3.2 2"><path d="M0.2,0.2 H3 L1.6,1.8 Z" fill="#333"/></svg>
<!-- dropdown 2 -->
<div style="left:493px;top:247.6px;width:89.6px;height:12.4px;box-sizing:border-box;border:0.6px solid #e4e6e9;border-radius:1.4px;background:#fff"></div>
<div class="p" style="left:496.2px;top:251.6px;color:#222">On click</div>
<svg style="left:574.4px;top:252.9px" width="3.2" height="2" viewBox="0 0 3.2 2"><path d="M0.2,0.2 H3 L1.6,1.8 Z" fill="#333"/></svg>
<!-- slider -->
<div style="left:494.6px;top:273.4px;width:86px;height:1.1px;background:#d5d5d5;border-radius:1px"></div>
<div style="left:494.6px;top:273.3px;width:70px;height:1.3px;background:#efc858;border-radius:1px"></div>
<div style="left:562.2px;top:271.5px;width:4.8px;height:4.8px;border-radius:3px;background:#eab71a"></div>
<div style="left:493px;top:282.6px;font-size:4px;color:#666">Slow</div>
<div style="left:517.5px;width:40px;text-align:center;top:282.6px;font-size:4px;color:#666">Medium</div>
<div style="left:552.6px;width:30px;text-align:right;top:282.6px;font-size:4px;color:#444">Fast</div>
<div class="hr" style="top:292px"></div>
<div style="left:493px;top:296.4px;width:47px;height:9.6px;box-sizing:border-box;border:0.5px solid #e2e4e7;border-radius:1.2px;background:#fff"></div>
<svg style="left:495.6px;top:299.2px" width="4" height="4" viewBox="0 0 4 4"><path d="M2,0.2 V3.8 M0.2,2 H3.8" stroke="#e6a700" stroke-width="0.75"/></svg>
<div style="left:502.4px;top:299px;font-size:4.8px;color:#222;font-weight:700;letter-spacing:-0.05px">Add animation</div>
<div class="hr" style="top:309.2px"></div>
<div style="left:493px;top:314.8px;width:26.4px;height:12px;border-radius:1.4px;background:#f9b72b;box-shadow:0 0.5px 0.8px rgba(0,0,0,0.25)"></div>
<div style="left:493px;width:26.4px;text-align:center;top:319.2px;font-size:4.6px;font-weight:700;color:#3a2a06">Play</div>
<!-- side icons -->
<div style="left:599.6px;top:128px;width:5.8px;height:5.8px;border-radius:0.8px;background:#1a73e8;box-sizing:border-box;border-bottom:1px solid #fbbc04;border-right:1px solid #34a853"></div>
<div style="left:600.9px;top:129.3px;width:3.2px;height:3.2px;background:#fff"></div>
<div style="left:599.9px;top:146.6px;width:5.4px;height:6.2px;border-radius:0.8px;background:#fbbc04"></div>
<div style="left:601.7px;top:148.2px;width:1.8px;height:2.2px;border-radius:1px;background:#fff"></div>
<svg style="left:599.5px;top:164.8px" width="6.4" height="6.4" viewBox="0 0 6.4 6.4"><circle cx="3.2" cy="3.2" r="2.4" fill="none" stroke="#1a73e8" stroke-width="1.1"/><path d="M2.1,3.2 L3,4.1 L4.6,2.3" fill="none" stroke="#1a73e8" stroke-width="0.7"/></svg>
<svg style="left:599.6px;top:183.8px" width="6.2" height="6.4" viewBox="0 0 6.2 6.4"><circle cx="3.1" cy="1.9" r="1.4" fill="#1a73e8"/><path d="M0.5,6 C0.5,4 1.8,3.6 3.1,3.6 C4.4,3.6 5.7,4 5.7,6 Z" fill="#1a73e8"/></svg>
<svg style="left:600px;top:202.6px" width="5.4" height="7" viewBox="0 0 5.4 7"><path d="M2.7,6.8 C1.2,4.6 0.3,3.8 0.3,2.6 A2.4,2.4 0 0 1 5.1,2.6 C5.1,3.8 4.2,4.6 2.7,6.8 Z" fill="#34a853"/><path d="M2.7,0.2 A2.4,2.4 0 0 1 5.1,2.6 L2.7,2.6 Z" fill="#4285f4"/><path d="M0.3,2.6 A2.4,2.4 0 0 1 2.7,0.2 L2.7,2.6 Z" fill="#ea4335"/><circle cx="2.7" cy="2.5" r="0.9" fill="#fff"/><path d="M0.5,3.4 L2.7,6.8 L2,3.4 Z" fill="#fbbc04"/></svg>
<svg style="left:600.2px;top:233.6px" width="4.8" height="4.8" viewBox="0 0 4.8 4.8"><path d="M2.4,0.3 V4.5 M0.3,2.4 H4.5" stroke="#444" stroke-width="0.7"/></svg>
<div class="n" style="top:150.1px">1</div>
<div class="n" style="top:184.0px">2</div>
<div class="n" style="top:217.7px">3</div>
<div class="n" style="top:252.1px">4</div>
<div class="n" style="top:286.5px">5</div>
<div class="n" style="top:321.1px">6</div>
<div class="n" style="top:355.1px">7</div>
<svg style="left:32.4px;top:156.6px" width="5.4" height="5.4" viewBox="0 0 5.4 5.4"><path d="M2.2,3.2 L3.6,1.8 A0.9,0.9 0 0 1 4.9,3.1 L3.6,4.4 M3.2,2.2 L1.8,3.6 A0.9,0.9 0 0 1 0.5,2.3 L1.8,1" fill="none" stroke="#444" stroke-width="0.7" transform="rotate(90 2.7 2.7)"/></svg>
<div style="left:42.4px;top:147.4px;width:51px;height:28.6px;box-sizing:border-box;border:1.3px solid #1a73e8;border-radius:3.4px;background:#fff"></div>
<div class="th" style="left:44.4px;top:149.4px;width:47px;height:24.6px;background:#222;border-radius:2px"><div style="left:4.5px;top:3.6px;font-size:1.6px;color:#fff">Oh,</div><div style="left:4.4px;top:5.2px;font-size:2.6px;color:#fff;font-weight:700">Hi there!</div><div style="left:4.5px;top:10px;width:13px;height:0.6px;background:#8a8a8a"></div><div style="left:5.5px;top:12.6px;width:12px;height:0.6px;background:#7a7a7a"></div><div style="left:5.5px;top:15.2px;width:12px;height:0.6px;background:#7a7a7a"></div><div style="left:5.5px;top:17.8px;width:13px;height:0.6px;background:#7a7a7a"></div><div style="left:4.5px;top:21.2px;width:17px;height:0.7px;background:#ddd"></div><div style="left:26.4px;top:2.2px;width:17.6px;height:21.6px;background:#ae8856;overflow:hidden"><div style="left:6.4px;top:4.2px;width:7.2px;height:8px;border-radius:4px;background:#8c4e2e"></div><div style="left:6.2px;top:5.6px;width:5.6px;height:7.4px;border-radius:3px;background:#e3b9a0"></div><div style="left:7.6px;top:11.5px;width:4.6px;height:5px;background:#dcae94"></div><div style="left:3px;top:15px;width:16px;height:9px;border-radius:5px 6px 0 0;background:#e6e1d5"></div><div style="left:4.2px;top:11.4px;width:2.2px;height:5.6px;background:#222;transform:rotate(28deg)"></div><div style="left:5.2px;top:9.4px;width:3px;height:3px;border-radius:2px;background:#c9c9c9"></div></div></div>
<div class="th" style="top:182.5px;background:#f15a29"><div style="left:12px;top:5.2px;font-size:2.7px;font-weight:700;color:#fff;line-height:1.3">Status Report<br>Project name</div><div style="left:12px;top:19.6px;width:12px;height:0.5px;background:#f9b9a2"></div></div>
<div class="th" style="top:216.2px;background:#fff;box-shadow:0 0 0 0.4px #dcdcdc"><div style="left:24.4px;top:0;width:25px;height:27px;background:#f15a29"></div><div style="left:7.4px;top:12.4px;font-size:2.2px;color:#f15a29;font-weight:700">Fresh 2019</div><div style="left:28px;top:5.4px;width:8.5px;height:0.8px;background:#fff"></div><div style="left:28px;top:7.2px;width:10px;height:0.5px;background:#fbd0c2"></div><div style="left:28px;top:8.6px;width:8px;height:0.5px;background:#fbd0c2"></div><div style="left:28px;top:11.4px;width:8.5px;height:0.8px;background:#fff"></div><div style="left:28px;top:13.2px;width:10px;height:0.5px;background:#fbd0c2"></div><div style="left:28px;top:14.6px;width:8px;height:0.5px;background:#fbd0c2"></div><div style="left:28px;top:17.4px;width:8.5px;height:0.8px;background:#fff"></div><div style="left:28px;top:19.2px;width:10px;height:0.5px;background:#fbd0c2"></div><div style="left:28px;top:20.6px;width:8px;height:0.5px;background:#fbd0c2"></div></div>
<div class="th" style="top:250.6px;background:#fff;box-shadow:0 0 0 0.4px #dcdcdc"><div style="left:12px;top:3.6px;font-size:2.3px;color:#222;font-weight:700">Progress - tasks area 1</div><div style="left:12px;top:8.6px;width:8.5px;height:0.6px;background:#f15a29"></div><div style="left:27px;top:8.6px;width:9px;height:0.6px;background:#f15a29"></div><div style="left:13.4px;top:11.0px;width:10px;height:0.6px;background:#555"></div><div style="left:28.4px;top:11.0px;width:9px;height:0.6px;background:#555"></div><div style="left:13.4px;top:12.5px;width:8px;height:0.6px;background:#555"></div><div style="left:28.4px;top:12.5px;width:10px;height:0.6px;background:#555"></div><div style="left:13.4px;top:14.0px;width:9px;height:0.6px;background:#555"></div><div style="left:28.4px;top:14.0px;width:7px;height:0.6px;background:#555"></div><div style="left:13.4px;top:15.5px;width:7px;height:0.6px;background:#555"></div><div style="left:28.4px;top:15.5px;width:9px;height:0.6px;background:#555"></div><div style="left:13.4px;top:17.0px;width:10px;height:0.6px;background:#555"></div><div style="left:28.4px;top:17.0px;width:8px;height:0.6px;background:#555"></div><div style="left:13.4px;top:18.5px;width:8px;height:0.6px;background:#555"></div><div style="left:28.4px;top:18.5px;width:5px;height:0.6px;background:#555"></div><div style="left:13.4px;top:20.0px;width:6px;height:0.6px;background:#555"></div><div style="left:28.4px;top:20.0px;width:0px;height:0.6px;background:#555"></div></div>
<div class="th" style="top:285px;background:#0c0c0c"><div style="left:0;width:49px;text-align:center;top:9.2px;font-size:3.4px;color:#f2f2f2;font-weight:700">Science Fair Project</div><div style="left:18.5px;top:16.6px;width:12px;height:0.5px;background:#666"></div><div style="left:14px;top:14px;width:21px;height:14px;border-radius:10px;background:radial-gradient(closest-side,rgba(90,90,100,0.5),rgba(0,0,0,0))"></div></div>
<div class="th" style="top:319.6px;background:#232323;height:25.6px"><div style="left:2.6px;top:3px;font-size:2.3px;color:#f0f0f0;font-weight:700">Why I chose this science experiment</div><div style="left:2.6px;top:7.8px;width:40px;height:0.5px;background:#8a8a8a"></div><div style="left:2.6px;top:9.4px;width:33px;height:0.5px;background:#8a8a8a"></div></div>
<div class="th" style="top:353.6px;background:#232323;height:25.6px"><div style="left:2.6px;top:10.2px;font-size:2.6px;color:#f0f0f0;font-weight:700;line-height:1.25;text-align:center">The problem &amp;<br>challenge</div></div>
<svg style="left:36.6px;top:390.4px" width="5" height="5" viewBox="0 0 5 5"><path d="M0.4,0.4 H2.1 V2.1 H0.4 Z M2.9,0.4 H4.6 V2.1 H2.9 Z M0.4,2.9 H2.1 V4.6 H0.4 Z M2.9,2.9 H4.6 V4.6 H2.9 Z" fill="#555"/></svg>
<div style="left:290px;top:390.6px;width:8.4px;height:0.9px;background:#9a9a9a;border-radius:0.5px"></div>
<!--FILM2-->
<!-- bottom shade -->
<div style="left:28px;top:300px;width:583px;height:106px;background:linear-gradient(180deg,rgba(0,0,0,0) 0%,rgba(0,0,0,0.03) 40%,rgba(0,0,0,0.105) 80%,rgba(0,0,0,0.17) 100%)"></div>
</div>
<svg class="abs" style="left:0;top:0" width="640" height="480" viewBox="0 0 640 480">
<defs>
<linearGradient id="gTri" x1="556" y1="0" x2="640" y2="0" gradientUnits="userSpaceOnUse">
<stop offset="0" stop-color="#5b47f2"/><stop offset="0.22" stop-color="#4678f6"/><stop offset="0.45" stop-color="#36aefa"/><stop offset="0.65" stop-color="#48d4f6"/><stop offset="0.82" stop-color="#74e8e6"/><stop offset="1" stop-color="#a8f5cd"/></linearGradient>
<filter id="ts" x="-10%" y="-20%" width="120%" height="140%"><feGaussianBlur stdDeviation="1.6"/></filter>
<filter id="ls" x="-10%" y="-30%" width="120%" height="160%"><feGaussianBlur stdDeviation="1.4"/></filter>
</defs>
<!-- triangle -->
<path d="M556,420 L640,336 L640,420 Z" fill="url(#gTri)"/>
<!-- FLY IN -->
<g font-family="Liberation Sans, sans-serif" font-weight="700" font-size="100"><text transform="translate(230.01,151.60) scale(0.4560,0.5884)" fill="#000" stroke="#000" stroke-width="6.6" vector-effect="non-scaling-stroke" stroke-linejoin="round">F</text><text transform="translate(262.72,151.60) scale(0.4549,0.5884)" fill="#000" stroke="#000" stroke-width="6.6" vector-effect="non-scaling-stroke" stroke-linejoin="round">L</text><text transform="translate(293.70,151.60) scale(0.5524,0.5884)" fill="#000" stroke="#000" stroke-width="6.6" vector-effect="non-scaling-stroke" stroke-linejoin="round">Y</text><text transform="translate(347.75,151.60) scale(0.4929,0.5884)" fill="#000" stroke="#000" stroke-width="6.6" vector-effect="non-scaling-stroke" stroke-linejoin="round">I</text><text transform="translate(366.32,151.60) scale(0.5966,0.5884)" fill="#000" stroke="#000" stroke-width="6.6" vector-effect="non-scaling-stroke" stroke-linejoin="round">N</text><text transform="translate(230.01,151.60) scale(0.4560,0.5884)" fill="#ffdd2e" stroke="#ffdd2e" stroke-width="2.4" vector-effect="non-scaling-stroke" stroke-linejoin="miter">F</text><text transform="translate(262.72,151.60) scale(0.4549,0.5884)" fill="#ffdd2e" stroke="#ffdd2e" stroke-width="2.4" vector-effect="non-scaling-stroke" stroke-linejoin="miter">L</text><text transform="translate(293.70,151.60) scale(0.5524,0.5884)" fill="#ffdd2e" stroke="#ffdd2e" stroke-width="2.4" vector-effect="non-scaling-stroke" stroke-linejoin="miter">Y</text><text transform="translate(347.75,151.60) scale(0.4929,0.5884)" fill="#ffdd2e" stroke="#ffdd2e" stroke-width="2.4" vector-effect="non-scaling-stroke" stroke-linejoin="miter">I</text><text transform="translate(366.32,151.60) scale(0.5966,0.5884)" fill="#ffdd2e" stroke="#ffdd2e" stroke-width="2.4" vector-effect="non-scaling-stroke" stroke-linejoin="miter">N</text></g>
<!-- arrow -->
<g id="arrow">
<path d="M570,216.6 C572.8,225 571,232 568.1,237.5 C564,246 560,250 555,254.4 C549,259.5 543,262.5 536.25,264.1 C530,265.8 524,266.6 517.5,267.1 L512.4,268.2 L518,273 Q519.8,275.4 517.2,276.8 Q515,277.6 513,276.6 L492,267.2 Q489.4,265.6 492,263.8 L513,249 Q515.4,247.6 517.4,248.8 Q519.2,250.4 517.8,252.4 L510.6,258.1 L517.5,258.1 C524,257.6 528,256.6 532.5,255.3 C539,253 544.5,250.5 549.4,246.9 C555,242.5 559,238.5 562.5,233.75 C565.5,229 567,224 568.1,218.75 C568.6,216.6 569.6,215.6 570,216.6 Z" fill="#e51520" stroke="#fff" stroke-width="2.2" stroke-linejoin="round" paint-order="stroke"/>
</g>
<!-- logo -->
<g id="logo">
<g filter="url(#ls)" opacity="0.3"><circle cx="48.1" cy="385.6" r="10.8" fill="#000"/><text x="64" y="390.4" textLength="97.5" lengthAdjust="spacingAndGlyphs" font-family="Liberation Sans, sans-serif" font-weight="700" font-size="19.4" fill="#000">AsapGuide</text></g>
<path fill-rule="evenodd" d="M48.1,373.9 a10.8,10.8 0 1 0 0.001,0 Z M50.2,374.6 L53.4,374.6 L50.6,381.6 L54.9,381.6 L46.3,395.4 L48.2,386.6 L43.4,386.6 Z" fill="#fff"/>
<text x="64" y="389.3" textLength="97.5" lengthAdjust="spacingAndGlyphs" font-family="Liberation Sans, sans-serif" font-weight="700" font-size="19.4" fill="#fff">AsapGuide</text>
</g>
</svg>
</div>
</body></html>
